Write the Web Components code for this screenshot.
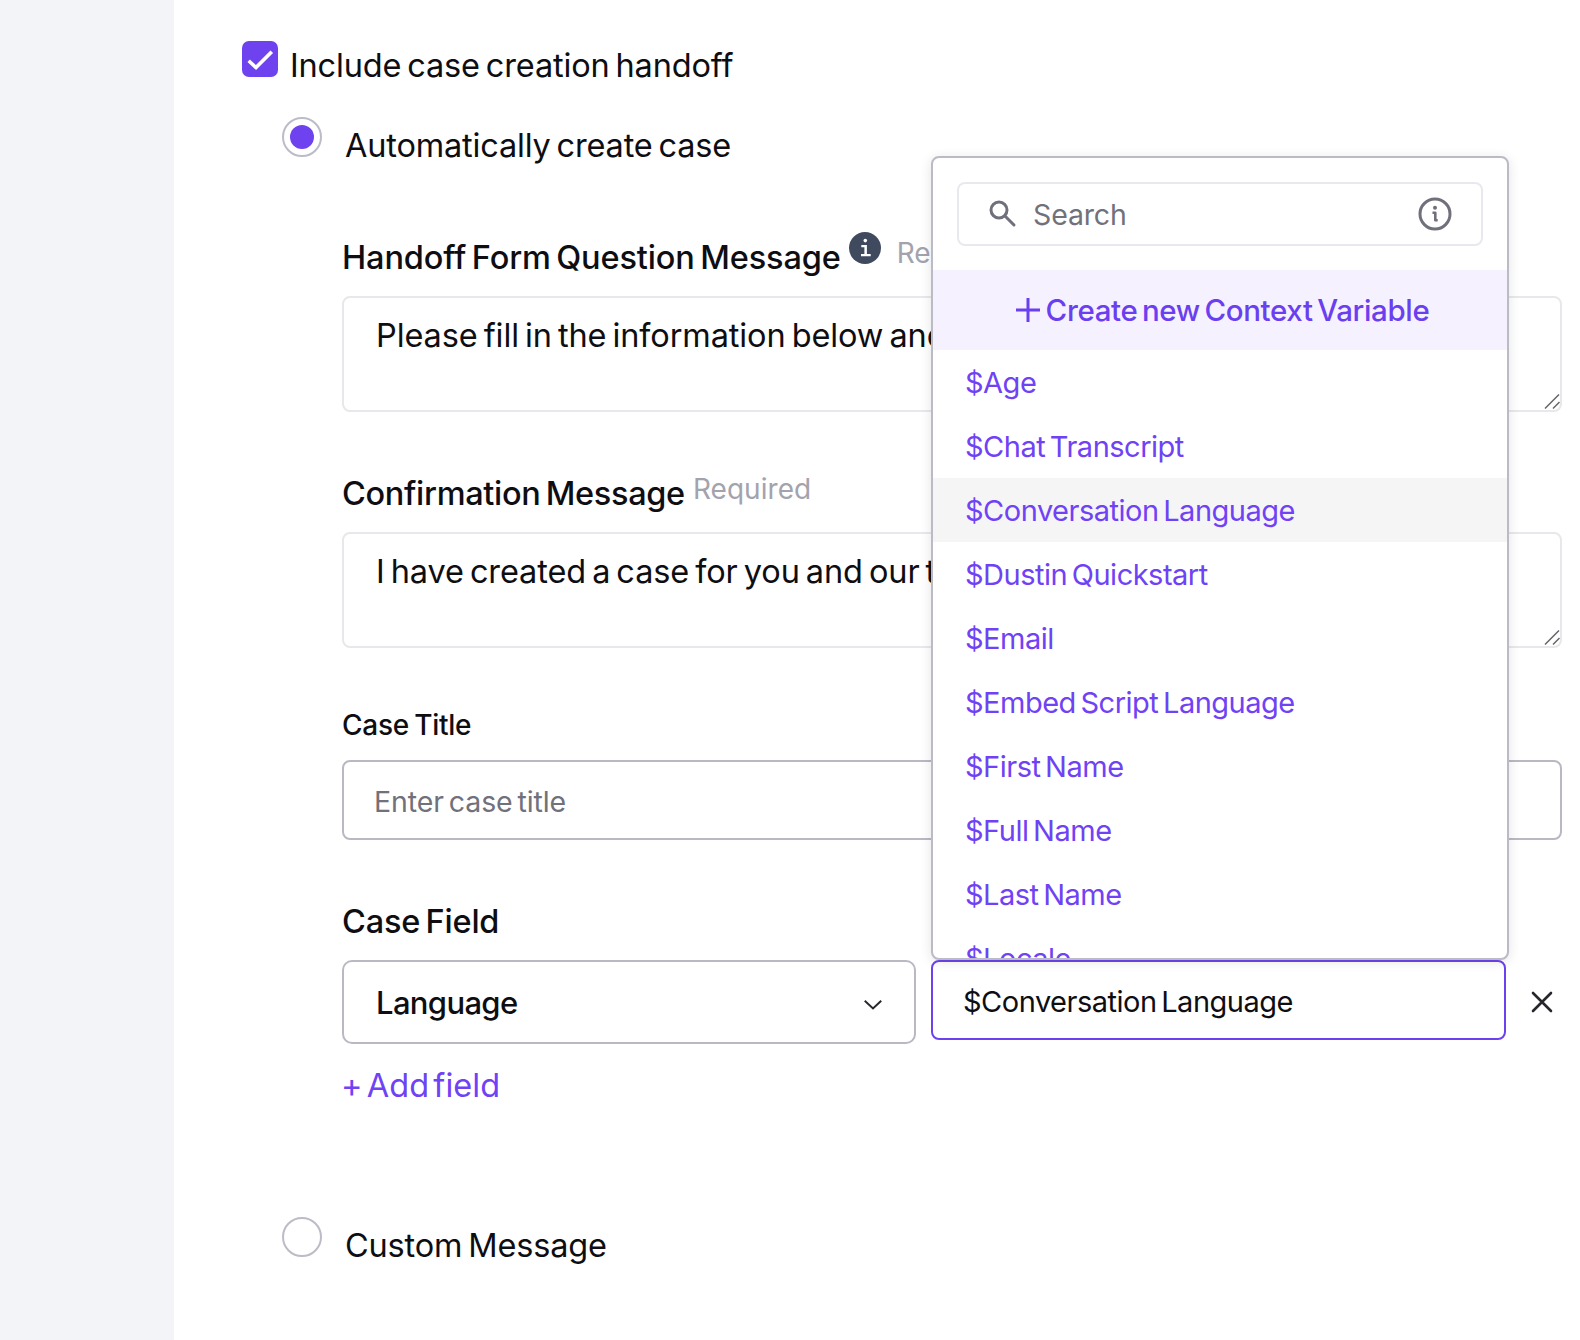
<!doctype html>
<html>
<head>
<meta charset="utf-8">
<style>
  html, body { margin: 0; height: 100%; background: #fff; }
  body { font-family: Inter, "Noto Sans", sans-serif; color: #0e0e12; overflow: hidden; }
</style>
</head>
<body>
<handoff-page>
  <check-row label="Include case creation handoff"></check-row>
  <radio-option label="Automatically create case" checked>
    <text-area-field label="Handoff Form Question Message" info required style="margin-top:65px;--ls:-0.14px"
      value="Please fill in the information below and"></text-area-field>
    <text-area-field label="Confirmation Message" required style="margin-top:58px;--ls:-0.33px"
      value="I have created a case for you and our team"></text-area-field>
    <text-input-field label="Case Title" placeholder="Enter case title" style="margin-top:57px"></text-input-field>
    <case-field-row style="margin-top:58px"></case-field-row>
  </radio-option>
  <radio-option label="Custom Message" style="margin-top:107px"></radio-option>
</handoff-page>

<script>
class HandoffPage extends HTMLElement {
  constructor() {
    super();
    this.attachShadow({ mode: 'open' });
    this.shadowRoot.innerHTML = `
      <style>
        :host { display: flex; height: 1340px; overflow: hidden; }
        .side { width: 174px; flex: none; background: #f2f4f8; }
        .main { flex: 1; min-width: 0; padding: 41px 18px 0 68px; }
      </style>
      <div class="side"></div>
      <div class="main"><slot></slot></div>
    `;
  }
}
customElements.define('handoff-page', HandoffPage);

class CheckRow extends HTMLElement {
  constructor() {
    super();
    this.attachShadow({ mode: 'open' });
    this.shadowRoot.innerHTML = `
      <style>
        :host { display: flex; gap: 12px; height: 48px; font-size: 32.5px; letter-spacing: -0.16px; word-spacing: -3px; line-height: 48px; }
        .box { width: 36px; height: 36px; border-radius: 7px; background: #6f42f0; display: block; }
        .box svg { display: block; }
        .text { padding-top: 1px; }
      </style>
      <span class="box">
        <svg width="36" height="36" viewBox="0 0 36 36" fill="none" stroke="#fff" stroke-width="3.6" stroke-linecap="square"><path d="M8 21l6 5.5L28.5 12"/></svg>
      </span>
      <span class="text">${this.getAttribute('label') || ''}</span>
    `;
  }
}
customElements.define('check-row', CheckRow);

class RadioOption extends HTMLElement {
  constructor() {
    super();
    this.attachShadow({ mode: 'open' });
    const on = this.hasAttribute('checked');
    this.shadowRoot.innerHTML = `
      <style>
        :host { display: block; margin-left: 40px; margin-top: 28px; }
        .row { display: flex; gap: 23px; height: 52px; }
        .dot { width: 40px; height: 40px; box-sizing: border-box; border: 2px solid #bcbcc8; border-radius: 50%; display: flex; align-items: center; justify-content: center; flex: none; }
        .dot i { width: 24px; height: 24px; border-radius: 50%; background: #6f42f0; display: ${on ? 'block' : 'none'}; }
        .text { padding-top: 5px; font-size: 32.5px; letter-spacing: -0.18px; word-spacing: -3px; line-height: 48px; }
        .body { padding-left: 60px; }
      </style>
      <div class="row"><span class="dot"><i></i></span><span class="text">${this.getAttribute('label') || ''}</span></div>
      <div class="body"><slot></slot></div>
    `;
  }
}
customElements.define('radio-option', RadioOption);

const resizeGrip = `<svg class="grip" width="16" height="16" viewBox="0 0 16 16" fill="none" stroke="#666" stroke-width="1.5"><path d="M1 14.5L15 .5M9 14.5l6.5-6.5"/></svg>`;

class TextAreaField extends HTMLElement {
  constructor() {
    super();
    this.attachShadow({ mode: 'open' });
    const info = this.hasAttribute('info') ? `<info-dot></info-dot>` : '';
    const req = this.hasAttribute('required') ? `<span class="req">Required</span>` : '';
    this.shadowRoot.innerHTML = `
      <style>
        :host { display: block; }
        .label { display: flex; height: 48px; white-space: nowrap; font-size: 32.5px; font-weight: 450; letter-spacing: var(--ls, -0.25px); word-spacing: -3px; line-height: 48px; }
        .req { font-size: 28px; font-weight: 400; letter-spacing: 0.05px; color: #a3a3ad; margin-left: 8px; line-height: 38px; }
        info-dot + .req { margin-left: 16px; }
        .area { position: relative; margin-top: 14px; height: 116px; box-sizing: border-box; border: 2px solid #e8e8ec; border-radius: 8px; padding: 14px 32px; font-size: 32.5px; letter-spacing: -0.1px; word-spacing: -3px; line-height: 48px; overflow: hidden; white-space: nowrap; }
        .grip { position: absolute; right: 0; bottom: 0; }
      </style>
      <div class="label"><span>${this.getAttribute('label')}</span>${info}${req}</div>
      <div class="area">${this.getAttribute('value') || ''}${resizeGrip}</div>
    `;
  }
}
customElements.define('text-area-field', TextAreaField);

class InfoDot extends HTMLElement {
  constructor() {
    super();
    this.attachShadow({ mode: 'open' });
    this.shadowRoot.innerHTML = `
      <style>
        :host { display: block; width: 32px; height: 32px; margin: -2px 0 0 8px; }
        svg { display: block; }
      </style>
      <svg width="32" height="32" viewBox="0 0 32 32"><circle cx="16" cy="16" r="16" fill="#3f4a5f"/><circle cx="16.3" cy="8.6" r="1.8" fill="#fff"/><path d="M12.3 13h5.6v9h3.8v2.2H12v-2.2h3.4v-6.8h-3.1z" fill="#fff"/></svg>
    `;
  }
}
customElements.define('info-dot', InfoDot);

class TextInputField extends HTMLElement {
  constructor() {
    super();
    this.attachShadow({ mode: 'open' });
    this.shadowRoot.innerHTML = `
      <style>
        :host { display: block; }
        .label { font-size: 28px; font-weight: 450; letter-spacing: -0.25px; word-spacing: -2px; line-height: 40px; }
        .box { margin-top: 15px; height: 80px; box-sizing: border-box; border: 2px solid #b9b9c4; border-radius: 8px; padding: 2px 30px 0; display: flex; align-items: center; font-size: 28.5px; letter-spacing: -0.1px; word-spacing: -3px; color: #71717c; }
      </style>
      <div class="label">${this.getAttribute('label')}</div>
      <div class="box">${this.getAttribute('placeholder') || ''}</div>
    `;
  }
}
customElements.define('text-input-field', TextInputField);

class CaseFieldRow extends HTMLElement {
  constructor() {
    super();
    this.attachShadow({ mode: 'open' });
    this.shadowRoot.innerHTML = `
      <style>
        :host { display: block; }
        .label { font-size: 32.5px; font-weight: 450; letter-spacing: -0.2px; word-spacing: -3px; line-height: 48px; }
        .row { display: flex; align-items: flex-start; margin-top: 14px; }
        .select { width: 574px; height: 84px; box-sizing: border-box; border: 2px solid #b9b9c4; border-radius: 10px; padding: 1px 32px 0; display: flex; align-items: center; justify-content: space-between; font-size: 31px; font-weight: 450; letter-spacing: -0.65px; }
        .value { position: relative; margin-left: 15px; width: 575px; height: 80px; box-sizing: border-box; border: 2px solid #6d42ee; border-radius: 8px; padding: 3px 30px 0; display: flex; align-items: center; font-size: 29px; letter-spacing: -0.5px; word-spacing: -3px; white-space: nowrap; }
        .close { margin: 30px 0 0 24px; display: block; }
        .add { margin: 18px 0 0 -1px; font-size: 32.5px; letter-spacing: 0.05px; word-spacing: -5px; line-height: 48px; color: #6f42f5; }
        variable-menu { position: absolute; left: -2px; bottom: calc(100% + 2px); }
      </style>
      <div class="label">Case Field</div>
      <div class="row">
        <div class="select">Language
          <svg width="18" height="10" viewBox="0 0 18 10" fill="none" stroke="#26262c" stroke-width="2" stroke-linecap="square" style="margin-top:5px"><path d="M1.5 1.5L9 8.5l7.5-7"/></svg>
        </div>
        <div class="value">$Conversation Language<variable-menu></variable-menu></div>
        <svg class="close" width="24" height="24" viewBox="0 0 24 24" fill="none" stroke="#26262c" stroke-width="2.6" stroke-linecap="round"><path d="M3 3l18 18M21 3L3 21"/></svg>
      </div>
      <div class="add">+ Add field</div>
    `;
  }
}
customElements.define('case-field-row', CaseFieldRow);

class VariableMenu extends HTMLElement {
  constructor() {
    super();
    this.attachShadow({ mode: 'open' });
    const names = ['Age', 'Chat Transcript', 'Conversation Language', 'Dustin Quickstart', 'Email',
      'Embed Script Language', 'First Name', 'Full Name', 'Last Name', 'Locale'];
    const rows = names.map(n => `<div class="item${n === 'Conversation Language' ? ' hot' : ''}">$${n}</div>`).join('');
    this.shadowRoot.innerHTML = `
      <style>
        :host { display: block; width: 578px; height: 804px; box-sizing: border-box; background: #fff; border: 2px solid #bbbbc5; border-radius: 8px; box-shadow: 0 2px 12px rgba(30,30,50,.12); overflow: hidden; }
        .top { padding: 24px 24px; }
        .search { height: 64px; box-sizing: border-box; border: 2px solid #e8e9ee; border-radius: 8px; display: flex; align-items: center; padding: 0 29px 0 30px; font-size: 28.5px; color: #71717c; letter-spacing: -0.15px; }
        .search span { margin-left: 16px; flex: 1; }
        .create { height: 80px; background: #f6f1fe; display: flex; align-items: center; justify-content: center; gap: 6px; font-size: 29.5px; font-weight: 550; letter-spacing: -0.35px; word-spacing: -3px; color: #6a3ff0; padding-left: 5px; }
        .item { height: 64px; line-height: 66px; padding-left: 32px; font-size: 29px; letter-spacing: -0.5px; word-spacing: -3px; color: #6f42f5; }
        .hot { background: #f5f5f6; }
      </style>
      <div class="top">
        <div class="search">
          <svg width="28" height="28" viewBox="0 0 28 28" fill="none" stroke="#6f707b" stroke-width="3" stroke-linecap="round"><circle cx="10" cy="10" r="8"/><path d="M16 16l9 9"/></svg>
          <span>Search</span>
          <svg width="34" height="34" viewBox="0 0 34 34" fill="none" stroke="#6f707b" stroke-width="3"><circle cx="17" cy="17" r="15"/><path d="M14.5 15.8h2.8v7.5h2.4" stroke-width="2.6" stroke-linejoin="round"/><circle cx="17" cy="10.8" r="2" fill="#6f707b" stroke="none"/></svg>
        </div>
      </div>
      <div class="create">
        <svg width="24" height="24" viewBox="0 0 24 24" fill="none" stroke="#6a3ff0" stroke-width="3"><path d="M12 0v24M0 12h24"/></svg>
        Create new Context Variable
      </div>
      ${rows}
    `;
  }
}
customElements.define('variable-menu', VariableMenu);
</script>
</body>
</html>
